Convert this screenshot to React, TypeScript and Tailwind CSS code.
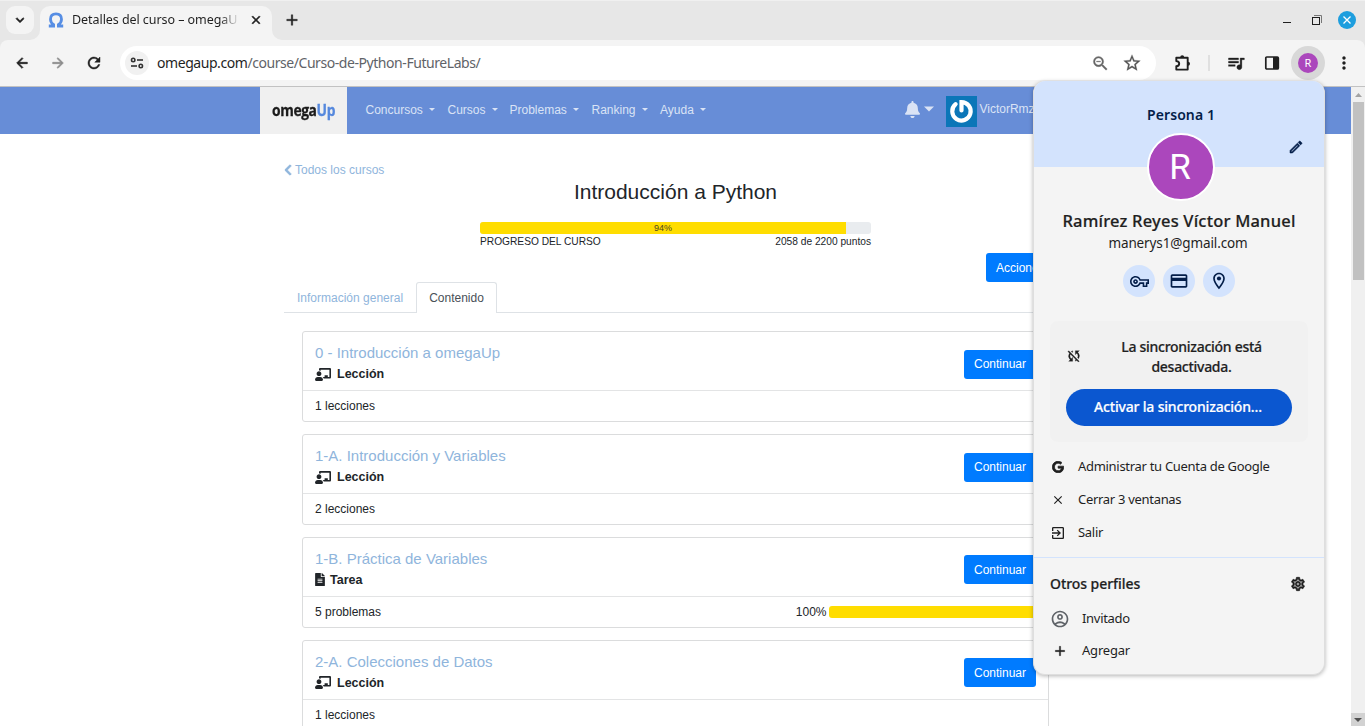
import React from "react";
import {
  MdAdd, MdArrowBack, MdArrowForward, MdClose, MdCreditCard, MdExitToApp, MdMoreVert,
  MdOutlineAccountCircle, MdOutlineEdit, MdOutlineLocationOn,
  MdOutlineSettings, MdOutlineVpnKey, MdQueueMusic, MdRefresh, MdStarBorder,
  MdSyncDisabled, MdZoomOut, MdKeyboardArrowDown,
} from "react-icons/md";
import { FaBell, FaChalkboardTeacher, FaChevronLeft, FaFileAlt, FaGoogle } from "react-icons/fa";

function TabStrip() {
  return (
    <div className="flex h-10 shrink-0 items-end border-t border-[#f0f0f0] bg-[#e7e7e7] font-['Noto_Sans',sans-serif]">
      <div className="mb-[6px] ml-[6px] flex size-7 items-center justify-center rounded-[9px] bg-[#f4f4f4]">
        <MdKeyboardArrowDown className="size-4 stroke-[#1f1f1f] stroke-1 text-[#1f1f1f]" />
      </div>
      <div className="relative ml-[6px] flex h-[34px] w-[232px] items-center rounded-t-[10px] bg-[#f4f4f4] pb-[6px]">
        <svg className="absolute bottom-0 -left-[10px]" width="10" height="10"><path d="M10 0V10H0A10 10 0 0 0 10 0Z" fill="#f4f4f4" /></svg>
        <svg className="absolute -right-[10px] bottom-0" width="10" height="10"><path d="M0 0V10H10A10 10 0 0 1 0 0Z" fill="#f4f4f4" /></svg>
        <svg className="ml-2 shrink-0" width="16" height="16" viewBox="0 0 16 16">
          <path d="M.8 14H5.600V12.600C3.700 11.400 2.500 9.600 2.500 7.200C2.500 3.800 4.700 1.800 8 1.800S13.500 3.800 13.500 7.200C13.500 9.600 12.300 11.400 10.400 12.600V14H15.200" fill="none" stroke="#578ee4" strokeWidth="2.800" />
        </svg>
        <span className="ml-2 w-[168px] overflow-hidden bg-linear-to-r from-[#1f1f1f] from-88% to-transparent bg-clip-text text-[12.500px] tracking-[-0.06px] whitespace-nowrap text-transparent">Detalles del curso – omegaU</span>
        <MdClose className="ml-[9px] size-[14px] shrink-0 stroke-[#1f1f1f] stroke-1 text-[#1f1f1f]" />
      </div>
      <MdAdd className="mb-[11px] ml-[11px] size-[18px] stroke-[#1f1f1f] stroke-[0.5px] text-[#1f1f1f]" />
      <div className="mb-[10px] ml-auto flex h-5 items-center">
        <svg width="40" height="20" viewBox="0 0 40 20" fill="none">
          <path d="M0 12.500H8" stroke="#1f1f1f" />
          <path d="M31 5.500H38.500V13" stroke="#777" />
          <rect x="29.500" y="7.500" width="7" height="7" stroke="#1f1f1f" />
        </svg>
        <svg className="mr-[9px] ml-[15px]" width="18" height="18" viewBox="0 0 18 18">
          <circle cx="9" cy="9" r="9" fill="#1e9ede" />
          <path d="M5.500 5.500L12.500 12.500M12.500 5.500L5.500 12.500" stroke="#fff" strokeWidth="1.300" />
        </svg>
      </div>
    </div>
  );
}

function Toolbar() {
  return (
    <div className="h-[47px] shrink-0 bg-[#e7e7e7]">
      <div className="flex h-[47px] items-center rounded-t-[8px] border-b border-[#c2c2c2] bg-[#f4f4f4] pl-[14px] font-['Noto_Sans',sans-serif] text-[#1f1f1f]">
        <MdArrowBack className="size-4 stroke-[#1f1f1f] stroke-1" />
        <MdArrowForward className="ml-5 size-4 stroke-[#8b8b8b] stroke-1 text-[#8b8b8b]" />
        <MdRefresh className="ml-[19px] size-[18px] stroke-[#1f1f1f] stroke-[0.6px]" />
        <div className="ml-[17px] flex h-[34px] w-[1036px] items-center rounded-full bg-white pl-[5px]">
          <div className="flex size-6 items-center justify-center rounded-full bg-[#f1f1f1]">
            <svg width="14" height="14" viewBox="0 0 14 14" fill="none" stroke="#333" strokeWidth="1.600">
              <circle cx="3.200" cy="4" r="1.700" /><path d="M7 4H13" />
              <circle cx="10.800" cy="10" r="1.700" /><path d="M1 10H7" />
            </svg>
          </div>
          <span className="mb-[2px] ml-2 text-[14px] tracking-[-0.44px] text-[#1f1f1f]">omegaup.com<span className="text-[#5f6368]">/course/Curso-de-Python-FutureLabs/</span></span>
          <MdZoomOut className="mr-[12px] ml-auto size-[19px] stroke-[#666] stroke-[0.4px] text-[#666]" />
          <MdStarBorder className="mr-[14px] size-[20px] stroke-[#555] stroke-[0.3px] text-[#555]" />
        </div>
        <svg className="ml-[17px] shrink-0" width="19" height="19" viewBox="0 0 19 19" fill="none" stroke="#1f1f1f">
          <path d="M3.300 3.700H14.700V15.600H3.300V12.300C5.500 12 6.200 11 6.200 9.700S5.500 7.300 3.300 7Z" strokeWidth="1.900" strokeLinejoin="round" />
          <path d="M7.200 3.200A2 2 0 0 1 11.200 3.200ZM15 7.700A2 2 0 0 1 15 11.700Z" fill="#1f1f1f" stroke="none" />
        </svg>
        <div className="ml-[16px] h-4 w-[2px] bg-[#e0e0e0]" />
        <MdQueueMusic className="ml-[16px] size-[20px] stroke-[#1f1f1f] stroke-[0.4px]" />
        <svg className="ml-[18px]" width="16" height="16" viewBox="0 0 16 16"><rect x="1.800" y="2" width="12.500" height="12" rx="1" fill="none" stroke="#1f1f1f" strokeWidth="1.700" /><path d="M9 2H14V14H9Z" fill="#1f1f1f" /></svg>
        <div className="ml-[11px] flex size-[34px] items-center justify-center rounded-full bg-[#d8d8d8]">
          <span className="flex size-5 items-center justify-center rounded-full bg-[#ab47bc] text-[11px] text-white">R</span>
        </div>
        <MdMoreVert className="ml-[9px] size-5" />
      </div>
    </div>
  );
}

const menus = [
  { label: "Concursos", width: "w-[82px]" },
  { label: "Cursos", width: "w-[62px]" },
  { label: "Problemas", width: "w-[82px]" },
  { label: "Ranking", width: "w-[68.500px]" },
  { label: "Ayuda", width: "w-[59.500px]" },
];

function Navbar() {
  return (
    <div className="flex h-[47px] items-center bg-[#678dd7] pl-[260px] text-[#dae3f5]">
      <div className="flex h-full w-[87px] items-center bg-[#f0f0f0] pb-[1px] pl-3">
        <span className="origin-left scale-x-[0.865] font-['Open_Sans',sans-serif] text-[16px] font-bold tracking-[-0.45px] text-[#1b1b1b] [-webkit-text-stroke:0.3px]">omega<span className="text-[#5588dd]">Up</span></span>
      </div>
      <div className="mb-[2px] ml-[18.500px] flex">
        {menus.map((m) => (
          <div key={m.label} className={`flex items-center ${m.width}`}>
            <span>{m.label}</span>
            <svg className="ml-[6px]" width="6" height="3"><path d="M0 0H6L3 3Z" fill="#dae3f5" /></svg>
          </div>
        ))}
      </div>
      <FaBell className="mb-[2px] ml-[185px] h-[17px] w-[15px]" />
      <svg className="mr-3 mb-[4px] ml-1" width="10" height="6"><path d="M0 .5H10L5 5.500Z" fill="#dae3f5" /></svg>
      <svg className="mt-[2px] shrink-0" width="31" height="31" viewBox="0 0 31 31">
        <rect width="31" height="31" fill="#0b76b8" />
        <path d="M9.600 8.200A9.200 9.200 0 1 0 15.500 6.100V14.500" fill="none" stroke="#fff" strokeWidth="4.200" strokeLinecap="round" />
      </svg>
      <span className="mb-[4px] ml-[3px]">VictorRmz</span>
    </div>
  );
}

const lessons = [
  { title: "0 - Introducción a omegaUp", kind: "Lección", detail: "1 lecciones" },
  { title: "1-A. Introducción y Variables", kind: "Lección", detail: "2 lecciones" },
  { title: "1-B. Práctica de Variables", kind: "Tarea", detail: "5 problemas", progress: "100%" },
  { title: "2-A. Colecciones de Datos", kind: "Lección", detail: "1 lecciones" },
];

function CoursePage() {
  return (
    <div className="h-[639px] w-[1351px] overflow-hidden bg-white font-['Liberation_Sans',sans-serif] text-[12px] leading-[18px] text-[#212529]">
      <Navbar />
      <div className="ml-[284px] w-[783px] pt-[27px]">
        <div className="flex h-[18px] items-center text-[#8fb5dc]"><FaChevronLeft className="mr-[3px] h-[12px] w-[8px] stroke-[#8fb5dc] stroke-[30px]" />Todos los cursos</div>
        <h1 className="h-[43px] text-center text-[21px] leading-[25px]">Introducción a Python</h1>
        <div className="mx-auto flex h-3 w-[391px] overflow-hidden rounded-[3px] bg-[#e9ecef]">
          <div className="w-[366px] bg-[#ffdd00] text-center text-[9px] leading-[12px] text-[#4c4520]">94%</div>
        </div>
        <div className="mx-auto flex h-[19px] w-[391px] justify-between text-[10.200px] leading-[15px] whitespace-nowrap"><span>PROGRESO DEL CURSO</span><span>2058 de 2200 puntos</span></div>
        <div className="flex h-[29px] justify-end"><div className="flex h-[29px] w-[69px] items-center rounded-[3px] bg-[#007bff] pl-[10px] text-white">Acciones</div><div className="w-3" /></div>
        <div className="flex h-[31px] border-b border-[#dee2e6]">
          <span className="w-[132px] pt-[7px] pl-[13px] text-[#8fb5dc]">Información general</span>
          <span className="h-[31px] w-[81px] rounded-t-[3px] border border-b-0 border-[#dee2e6] bg-white pt-[6px] text-center text-[#495057]">Contenido</span>
        </div>
        <div className="flex flex-col gap-3 px-[18px] pt-[18.400px]">
          {lessons.map((l) => (
            <div key={l.title} className="h-[90.800px] rounded-[3px] border border-[#dbdcdd]">
              <div className="flex h-[59px] items-start justify-between border-b border-[#e3e4e5] px-3">
                <div>
                  <div className="pt-3 text-[15px] leading-[18px] text-[#8fb5dc]">{l.title}</div>
                  <div className="mt-[2.900px] flex items-center text-[12.500px] font-bold">
                    {l.kind === "Tarea" ? <FaFileAlt className="mr-[5px] h-[13px] w-[10px]" /> : <FaChalkboardTeacher className="mr-[6px] h-[13px] w-[16px]" />}
                    {l.kind}
                  </div>
                </div>
                <div className="mt-[17.400px] flex h-[29px] w-[72px] items-center justify-center rounded-[3px] bg-[#007bff] text-white">Continuar</div>
              </div>
              <div className="flex items-center justify-between px-3 pt-[6px]">
                <span>{l.detail}</span>
                {l.progress && <div className="flex items-center gap-[2.500px]"><span>{l.progress}</span><div className="h-3 w-[207px] rounded-[3px] bg-[#ffdd00]" /></div>}
              </div>
            </div>
          ))}
        </div>
      </div>
    </div>
  );
}

function Scrollbar() {
  return (
    <div className="flex w-[14px] flex-col bg-[#f0f0f0] pl-[2px]">
      <svg width="11" height="15"><path d="M2 10H9L5.500 6Z" fill="#a3a3a3" /></svg>
      <div className="h-[178px] w-[11px] bg-[#c1c1c1]" />
      <div className="mt-auto -ml-[2px] flex h-[13px] w-[14px] items-center justify-center bg-[#d2d2d2]"><svg width="8" height="4"><path d="M0 0H8L4 4Z" fill="#505050" /></svg></div>
    </div>
  );
}

function ProfileMenu() {
  return (
    <div className="absolute top-[81px] left-[1033px] flex h-[594px] w-[292px] flex-col overflow-hidden rounded-[12px] border border-t-0 border-[#dedede] bg-[#f4f4f4] font-['Noto_Sans',sans-serif] text-[#1f1f1f] shadow-[0_1px_4px_rgba(0,0,0,0.3)]">
      <div className="relative h-[86px] shrink-0 bg-[#d3e3fd] pt-[24px] pl-[4px] text-center text-[14px] leading-[20px] font-semibold tracking-[0.1px] text-[#041e49]">
        Persona 1
        <MdOutlineEdit className="absolute right-[20px] bottom-[12px] size-4 stroke-[#041e49] stroke-[0.8px]" />
        <span className="absolute -bottom-[34px] left-[113px] flex size-[68px] items-center justify-center rounded-full border-2 border-white bg-[#ab47bc] pt-[2px] pr-[2px] font-['Roboto',sans-serif] text-[35px] font-normal text-white">R</span>
      </div>
      <div className="mt-[44px] text-center text-[16.500px] leading-[20px] font-medium tracking-[0.2px] whitespace-nowrap [-webkit-text-stroke:0.2px]">Ramírez Reyes Víctor Manuel</div>
      <div className="mt-[2px] pr-[2px] text-center text-[13.500px] leading-[20px] tracking-[-0.12px]">manerys1@gmail.com</div>
      <div className="mt-[12px] flex justify-center gap-2 text-[#041e49]">
        <span className="flex size-8 items-center justify-center rounded-full bg-[#d3e3fd]"><MdOutlineVpnKey className="size-[19px]" /></span>
        <span className="flex size-8 items-center justify-center rounded-full bg-[#d3e3fd]"><MdCreditCard className="size-[20px]" /></span>
        <span className="flex size-8 items-center justify-center rounded-full bg-[#d3e3fd]"><MdOutlineLocationOn className="size-[20px]" /></span>
      </div>
      <div className="mt-6 ml-4 h-[121px] w-[258px] shrink-0 rounded-[8px] bg-[#f1f1f1] px-4 pt-4">
        <div className="flex items-center text-[14px] leading-[20px] font-medium">
          <MdSyncDisabled className="mb-[2px] size-4 shrink-0 stroke-[#1f1f1f] stroke-[0.4px]" />
          <div className="ml-[9px] flex-1 text-center tracking-[-0.28px] whitespace-nowrap [-webkit-text-stroke:0.2px]">La sincronización está<br />desactivada.</div>
        </div>
        <div className="mt-3 flex h-[37px] items-center justify-center rounded-full bg-[#0b57d0] pr-[2px] pb-[2px] text-[14px] font-medium tracking-[-0.18px] text-white [-webkit-text-stroke:0.2px]">Activar la sincronización…</div>
      </div>
      <div className="mt-2 flex shrink-0 flex-col text-[13px] tracking-[-0.3px]">
        <div className="flex h-[33px] items-center gap-[12px] pl-4"><FaGoogle className="mx-[2px] size-3 stroke-[#1f1f1f] stroke-[30px]" />Administrar tu Cuenta de Google</div>
        <div className="flex h-[33px] items-center gap-[12px] pl-4"><MdClose className="mx-[1px] size-[14px]" />Cerrar 3 ventanas</div>
        <div className="flex h-[33px] items-center gap-[12px] pl-4"><MdExitToApp className="size-4" />Salir</div>
      </div>
      <div className="mt-[8px] h-px shrink-0 bg-[#d3e3fd]" />
      <div className="mt-[13px] flex h-6 shrink-0 items-center justify-between pr-[18px] pl-4 text-[14px] font-medium tracking-[-0.06px] [-webkit-text-stroke:0.2px]">Otros perfiles<MdOutlineSettings className="mt-[2px] size-4 stroke-[#1f1f1f] stroke-1" /></div>
      <div className="mt-[7px] flex h-[33px] items-center pl-4 text-[13px] tracking-[-0.3px]"><MdOutlineAccountCircle className="mr-[12px] size-5 text-[#5f6368]" />Invitado</div>
      <div className="flex h-[31px] items-center pl-[18px] text-[13px] tracking-[-0.2px]"><MdAdd className="mr-[14px] size-4 stroke-[#1f1f1f] stroke-[0.5px]" />Agregar</div>
    </div>
  );
}

export default function App() {
  return (
    <div className="relative flex h-[726px] w-[1365px] flex-col overflow-hidden [&_path[d^='M0_0h24v24']]:hidden">
      <TabStrip />
      <Toolbar />
      <div className="flex h-[639px]"><CoursePage /><Scrollbar /></div>
      <ProfileMenu />
    </div>
  );
}
